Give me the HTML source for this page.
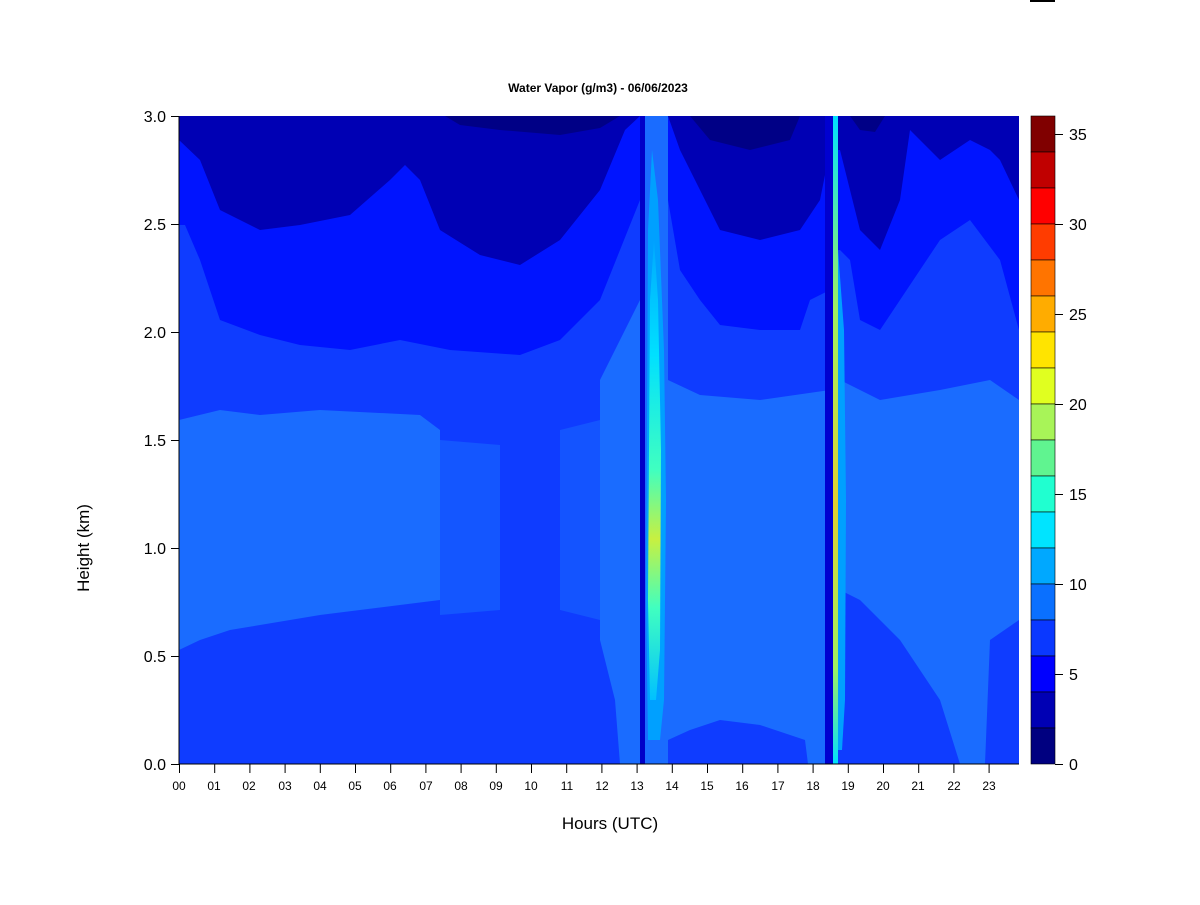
<!DOCTYPE html>
<html><head><meta charset="utf-8"><style>
body{margin:0;background:#fff;width:1200px;height:900px;overflow:hidden;font-family:"Liberation Sans",Arial,sans-serif}
</style></head><body>
<svg width="1200" height="900" xmlns="http://www.w3.org/2000/svg" font-family="Liberation Sans, Arial, sans-serif">
<defs>
<linearGradient id="cy" x1="0" y1="0" x2="0" y2="1">
<stop offset="0" stop-color="#00a8ff"/><stop offset="0.25" stop-color="#00e0ff"/>
<stop offset="0.5" stop-color="#40ffc0"/><stop offset="0.65" stop-color="#c8f040"/>
<stop offset="0.8" stop-color="#40ffc0"/><stop offset="1" stop-color="#00c0ff"/></linearGradient>
<linearGradient id="cy2" x1="0" y1="0" x2="0" y2="1">
<stop offset="0" stop-color="#00e0ff"/><stop offset="0.3" stop-color="#a0f060"/>
<stop offset="0.6" stop-color="#e0d030"/><stop offset="0.85" stop-color="#a0f060"/><stop offset="1" stop-color="#00e0ff"/></linearGradient>
</defs>
<rect x="1030" y="0" width="25" height="2" fill="#000"/>
<text x="598" y="92" font-size="12" font-weight="bold" text-anchor="middle">Water Vapor (g/m3) - 06/06/2023</text>
<g>
<rect x="179" y="116" width="840" height="648" fill="#0f3cff"/>
<polygon fill="#1a6cff" points="179,420 220,410 260,415 320,410 420,415 440,430 440,600 400,605 320,615 260,625 230,630 200,640 179,650"/>
<polygon fill="#1a6cff" opacity="0.55" points="440,440 500,445 500,610 440,615"/>
<polygon fill="#1a6cff" opacity="0.5" points="560,430 600,420 600,620 560,610"/>
<polygon fill="#1a6cff" points="600,380 640,300 640,764 620,764 615,700 600,640"/>
<polygon fill="#1a6cff" points="668,380 700,395 760,400 830,390 830,764 808,764 805,740 760,725 720,720 690,730 668,740"/>
<polygon fill="#1a6cff" points="840,380 880,400 940,390 990,380 1019,400 1019,620 990,640 985,764 960,764 940,700 900,640 860,600 840,590"/>
<polygon fill="#1a6cff" opacity="0.45" points="720,450 800,450 800,620 720,620"/>
<polygon fill="#0014ff" points="179,116 1019,116 1019,330 1000,260 970,220 940,240 900,300 880,330 860,320 850,260 840,250 832,250 830,290 810,300 800,330 760,330 720,325 700,300 680,270 668,200 668,116 645,116 640,200 620,250 600,300 560,340 520,355 450,350 400,340 350,350 300,345 260,335 220,320 200,260 185,225 179,225"/>
<polygon fill="#0000b4" points="179,116 1019,116 1019,200 1000,160 990,150 970,140 940,160 910,130 900,200 880,250 860,230 840,150 830,150 820,200 800,230 760,240 720,230 700,190 680,150 668,116 640,116 625,130 600,190 560,240 520,265 480,255 440,230 420,180 405,165 390,180 350,215 300,225 260,230 220,210 200,160 179,140"/>
<polygon fill="#000086" points="445,116 620,116 600,128 560,135 500,130 460,125"/>
<polygon fill="#000086" points="690,116 800,116 790,140 750,150 710,140"/>
<polygon fill="#000086" points="850,116 885,116 875,132 860,130"/>
<!-- strip 1 -->
<polygon fill="#1a6cff" points="644,116 668,116 668,764 644,764"/>
<polygon fill="#00a0ff" points="648,230 652,150 658,200 664,350 666,500 664,700 660,740 648,740 646,600"/>
<polygon fill="url(#cy)" points="650,300 654,240 658,300 661,450 660,650 656,700 650,700 648,600"/>
<rect x="640" y="116" width="5" height="648" fill="#0000c8"/>
<!-- strip 2 -->
<rect x="825" y="116" width="8" height="648" fill="#0000d0"/>
<polygon fill="#00a0ff" points="838,250 844,330 846,500 845,700 842,750 838,750"/>
<rect x="833" y="116" width="5" height="648" fill="url(#cy2)"/>
</g>
<g stroke="#000" stroke-width="1">
<line x1="179" y1="116" x2="179" y2="764"/>
<line x1="179" y1="764" x2="1019" y2="764"/>
<line x1="171" y1="116.5" x2="179" y2="116.5"/><line x1="171" y1="224.5" x2="179" y2="224.5"/>
<line x1="171" y1="332.5" x2="179" y2="332.5"/><line x1="171" y1="440.5" x2="179" y2="440.5"/>
<line x1="171" y1="548.5" x2="179" y2="548.5"/><line x1="171" y1="656.5" x2="179" y2="656.5"/>
<line x1="171" y1="764.5" x2="179" y2="764.5"/>
</g>
<g font-size="16" text-anchor="end">
<text x="166" y="122">3.0</text><text x="166" y="230">2.5</text><text x="166" y="338">2.0</text>
<text x="166" y="446">1.5</text><text x="166" y="554">1.0</text><text x="166" y="662">0.5</text><text x="166" y="770">0.0</text>
</g>
<g font-size="12" text-anchor="middle">
<path stroke="#000" d="M179.5,764v9M214.7,764v9M249.9,764v9M285.1,764v9M320.3,764v9M355.5,764v9M390.7,764v9M425.9,764v9M461.1,764v9M496.3,764v9M531.5,764v9M566.7,764v9M601.9,764v9M637.1,764v9M672.3,764v9M707.5,764v9M742.7,764v9M777.9,764v9M813.1,764v9M848.3,764v9M883.5,764v9M918.7,764v9M953.9,764v9M989.1,764v9"/>
<text x="179" y="790">00</text><text x="214" y="790">01</text><text x="249" y="790">02</text><text x="285" y="790">03</text>
<text x="320" y="790">04</text><text x="355" y="790">05</text><text x="390" y="790">06</text><text x="426" y="790">07</text>
<text x="461" y="790">08</text><text x="496" y="790">09</text><text x="531" y="790">10</text><text x="567" y="790">11</text>
<text x="602" y="790">12</text><text x="637" y="790">13</text><text x="672" y="790">14</text><text x="707" y="790">15</text>
<text x="742" y="790">16</text><text x="778" y="790">17</text><text x="813" y="790">18</text><text x="848" y="790">19</text>
<text x="883" y="790">20</text><text x="918" y="790">21</text><text x="954" y="790">22</text><text x="989" y="790">23</text>
</g>
<text x="610" y="829" font-size="17" text-anchor="middle">Hours (UTC)</text>
<text transform="translate(89,548) rotate(-90)" font-size="17" text-anchor="middle">Height (km)</text>
<g stroke="#000" stroke-width="0.6">
<rect x="1031" y="116" width="24" height="36" fill="#800000"/>
<rect x="1031" y="152" width="24" height="36" fill="#c00000"/>
<rect x="1031" y="188" width="24" height="36" fill="#ff0000"/>
<rect x="1031" y="224" width="24" height="36" fill="#ff3c00"/>
<rect x="1031" y="260" width="24" height="36" fill="#ff7400"/>
<rect x="1031" y="296" width="24" height="36" fill="#ffac00"/>
<rect x="1031" y="332" width="24" height="36" fill="#ffe400"/>
<rect x="1031" y="368" width="24" height="36" fill="#e0ff20"/>
<rect x="1031" y="404" width="24" height="36" fill="#a8f458"/>
<rect x="1031" y="440" width="24" height="36" fill="#60f490"/>
<rect x="1031" y="476" width="24" height="36" fill="#20ffd0"/>
<rect x="1031" y="512" width="24" height="36" fill="#00e4ff"/>
<rect x="1031" y="548" width="24" height="36" fill="#00a8ff"/>
<rect x="1031" y="584" width="24" height="36" fill="#0a70ff"/>
<rect x="1031" y="620" width="24" height="36" fill="#0a38ff"/>
<rect x="1031" y="656" width="24" height="36" fill="#0000ff"/>
<rect x="1031" y="692" width="24" height="36" fill="#0000b4"/>
<rect x="1031" y="728" width="24" height="36" fill="#000080"/>
<path stroke-width="1" d="M1055,764.5h8M1055,674.5h8M1055,584.5h8M1055,494.5h8M1055,404.5h8M1055,314.5h8M1055,224.5h8M1055,134.5h8"/>
</g>
<g font-size="16">
<text x="1069" y="770">0</text><text x="1069" y="680">5</text><text x="1069" y="590">10</text><text x="1069" y="500">15</text>
<text x="1069" y="410">20</text><text x="1069" y="320">25</text><text x="1069" y="230">30</text><text x="1069" y="140">35</text>
</g>
</svg>
</body></html>
